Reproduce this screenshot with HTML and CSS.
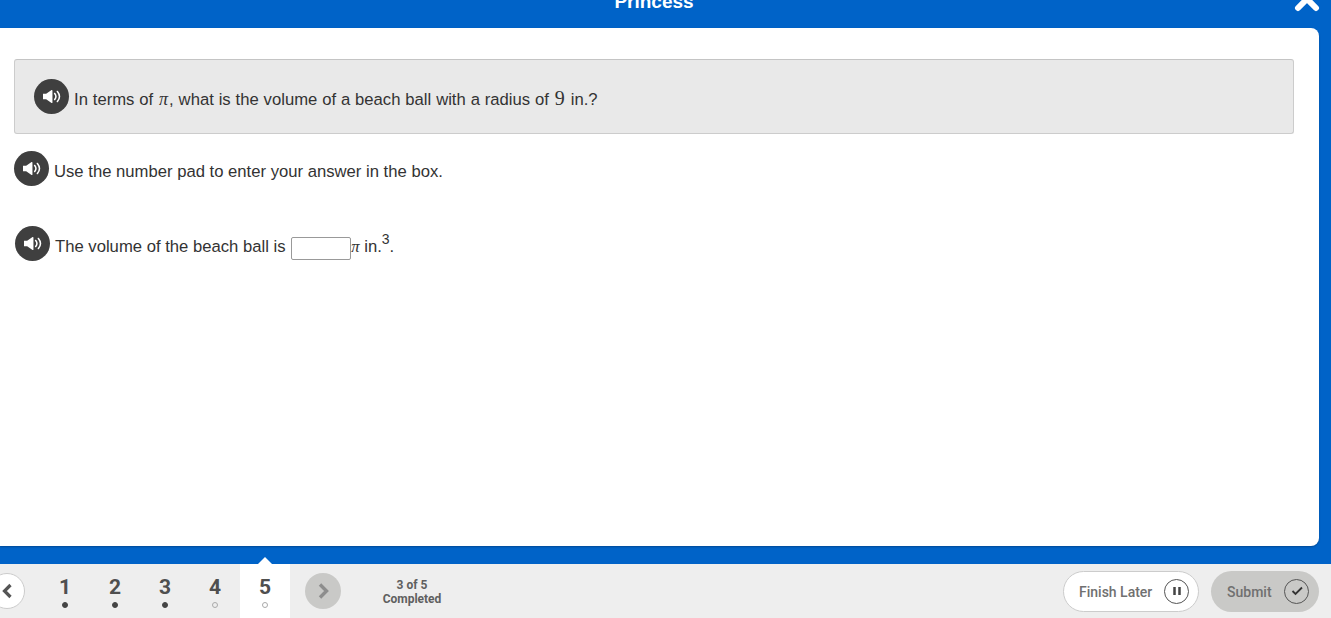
FILE: index.html
```html
<!DOCTYPE html>
<html>
<head>
    <title>Princess</title>
    <link rel="stylesheet" href="styles.css">
</head>
<body>

<svg class="icon-defs" width="0" height="0">
    <symbol id="speaker" viewBox="0 0 20 16">
        <path d="M0 5h3.500L9.500 .8c.5-.3 1-.1 1 .5v13.400c0 .6-.5.8-1 .5L3.500 11H0z" fill="#fff"/>
        <path d="M13 4.600c1.600 2 1.600 4.800 0 6.800M16 2.400c2.800 3.400 2.800 7.800 0 11.200" fill="none" stroke="#fff" stroke-width="1.700" stroke-linecap="round"/>
    </symbol>
</svg>

<header class="top-bar">
    <h1>Princess</h1>
    <svg class="close" width="26" height="12" viewBox="0 0 26 12">
        <path d="M4 8L13 -1L22 8" fill="none" stroke="#fff" stroke-width="6" stroke-linecap="round"/>
    </svg>
</header>

<main class="panel">
    <div class="prompt">
        <span class="speak"><svg width="18" height="15"><use href="#speaker"/></svg></span>
        <p>In terms of <i class="math pi">π</i>, what is the volume of a beach ball with a radius of <span class="math big">9</span> in.?</p>
    </div>
    <div class="line line-hint">
        <span class="speak"><svg width="18" height="15"><use href="#speaker"/></svg></span>
        <p>Use the number pad to enter your answer in the box.</p>
    </div>
    <div class="line line-answer">
        <span class="speak"><svg width="18" height="15"><use href="#speaker"/></svg></span>
        <p>The volume of the beach ball is <input class="answer" type="text"><i class="math">π</i> in.<sup>3</sup>.</p>
    </div>
</main>

<footer class="bottom-bar">
    <button class="round prev">
        <svg width="12" height="16" viewBox="0 0 12 16"><path d="M9.500 2L3.500 8L9.500 14" fill="none" stroke="#555" stroke-width="3.200"/></svg>
    </button>
    <ol class="pager">
        <li><b>1</b><span class="dot done"></span></li>
        <li><b>2</b><span class="dot done"></span></li>
        <li><b>3</b><span class="dot done"></span></li>
        <li><b>4</b><span class="dot"></span></li>
        <li class="current"><b>5</b><span class="dot"></span></li>
    </ol>
    <button class="round next">
        <svg width="12" height="18" viewBox="0 0 12 18"><path d="M3 2.500L9.500 9L3 15.500" fill="none" stroke="#8d8d8d" stroke-width="3.400"/></svg>
    </button>
    <div class="progress">3 of 5<br>Completed</div>
    <button class="pill later"><span class="pill-text">Finish Later</span>
        <span class="pill-icon">
            <svg width="10" height="10" viewBox="0 0 10 10"><path d="M2.500 1v8M7.500 1v8" stroke="#444" stroke-width="2.500"/></svg>
        </span>
    </button>
    <button class="pill submit"><span class="pill-text">Submit</span>
        <span class="pill-icon">
            <svg width="12" height="10" viewBox="0 0 12 10"><path d="M1.500 5l3 3L11 1.500" fill="none" stroke="#333" stroke-width="1.800"/></svg>
        </span>
    </button>
</footer>

</body>
</html>
```

FILE: styles.css
```css
html, body {
    height: 100%;
}
body {
    margin: 0;
    overflow: hidden;
    background-color: #0063c8;
    font-family: "Liberation Sans", Arial, sans-serif;
    color: #333;
    display: flex;
    flex-direction: column;
}
.icon-defs {
    position: absolute;
}
.top-bar {
    height: 28px;
    flex: none;
    display: flex;
    justify-content: center;
    overflow: hidden;
    position: relative;
}
.top-bar h1 {
    margin: -9px 23px 0 0;
    font-size: 19px;
    line-height: 21px;
    font-weight: bold;
    color: #fff;
}
.close {
    position: absolute;
    right: 11px;
    top: 0;
}
.panel {
    height: 518px;
    flex: none;
    width: 1319px;
    box-sizing: border-box;
    padding: 31px 25px 0 14px;
    background-color: #fff;
    border-radius: 0 8px 8px 0;
    box-shadow: 0 1px 2px rgba(0, 0, 0, 0.25);
    font-size: 16.66px;
}
.panel p {
    margin: 0;
    line-height: 24px;
}
.prompt {
    height: 75px;
    box-sizing: border-box;
    padding: 0 19px;
    display: flex;
    align-items: center;
    gap: 5px;
    background-color: #e9e9e9;
    border: 1px solid #ccc;
    border-top-color: #c4c4c4;
    border-radius: 3px;
}
.prompt p {
    margin-top: 5px;
    word-spacing: 0.25px;
}
.line {
    display: flex;
    align-items: center;
    gap: 5px;
}
.line-hint {
    margin-top: 17px;
}
.line-hint p {
    margin-top: 7px;
}
.line-answer {
    margin: 40px 0 0 1px;
}
.line-answer p {
    margin-top: 7px;
}
.speak {
    width: 35px;
    height: 35px;
    flex: none;
    border-radius: 50%;
    background-color: #3f3f3f;
    display: flex;
    align-items: center;
    justify-content: center;
}
.math {
    font-family: "Liberation Serif", "Times New Roman", serif;
}
.pi {
    margin: 0 1px 0 1px;
    font-size: 18px;
}
.big {
    font-size: 20px;
    margin: 0 1px;
}
.answer {
    width: 60px;
    height: 23px;
    box-sizing: border-box;
    margin: 0 0 0 1px;
    padding: 0;
    vertical-align: -1px;
    background-color: #fff;
    border: 1px solid #999;
    border-radius: 2px;
}
sup {
    font-size: 14px;
    line-height: 0;
    vertical-align: 8px;
}
.bottom-bar {
    height: 54px;
    margin-top: 18px;
    flex: none;
    display: flex;
    align-items: center;
    background-color: #eee;
    font-family: Roboto, Arial, sans-serif;
    position: relative;
}
.round {
    width: 36px;
    height: 36px;
    padding: 0;
    flex: none;
    border-radius: 50%;
    display: flex;
    align-items: center;
    justify-content: center;
}
.prev {
    margin-left: -11px;
    background-color: #fff;
    border: 1px solid #ccc;
    justify-content: flex-start;
    padding-left: 11px;
}
.next {
    margin-left: 15px;
    background-color: #c9c9c7;
    border: none;
}
.pager {
    list-style: none;
    margin: 0 0 0 15px;
    padding: 0;
    display: flex;
    height: 54px;
}
.pager li {
    width: 50px;
    display: flex;
    flex-direction: column;
    align-items: center;
    padding-top: 11px;
    box-sizing: border-box;
    color: #4f4f4f;
}
.pager b {
    font-size: 21px;
    line-height: 24px;
    font-weight: 700;
}
.pager .current {
    background-color: #fff;
    position: relative;
}
.pager .current::before {
    content: "";
    position: absolute;
    left: 18px;
    top: -7px;
    border: 7px solid transparent;
    border-top: 0;
    border-bottom-color: #fff;
}
.dot {
    width: 6px;
    height: 6px;
    margin-top: 3px;
    box-sizing: border-box;
    border: 1px solid #aaa;
    border-radius: 50%;
}
.dot.done {
    background-color: #444;
    border-color: #444;
}
.progress {
    width: 100px;
    margin: 2px 0 0 21px;
    text-align: center;
    font-size: 12px;
    line-height: 14px;
    font-weight: 700;
    color: #5f5f5f;
}
.pill {
    height: 41px;
    box-sizing: border-box;
    display: flex;
    align-items: center;
    justify-content: space-between;
    border-radius: 21px;
    font-family: Roboto, Arial, sans-serif;
    font-size: 14px;
    font-weight: 500;
    color: #707070;
}
.pill-text {
    margin-top: 2px;
}
.later {
    width: 136px;
    margin-left: auto;
    padding: 0 9px 0 15px;
    background-color: #fff;
    border: 1px solid #ccc;
}
.submit {
    width: 108px;
    margin: 0 12px 0 12px;
    padding: 0 10px 0 16px;
    background-color: #c9c9c7;
    border: none;
}
.pill-icon {
    width: 25px;
    height: 25px;
    box-sizing: border-box;
    border: 1px solid #555;
    border-radius: 50%;
    display: flex;
    align-items: center;
    justify-content: center;
}
```
